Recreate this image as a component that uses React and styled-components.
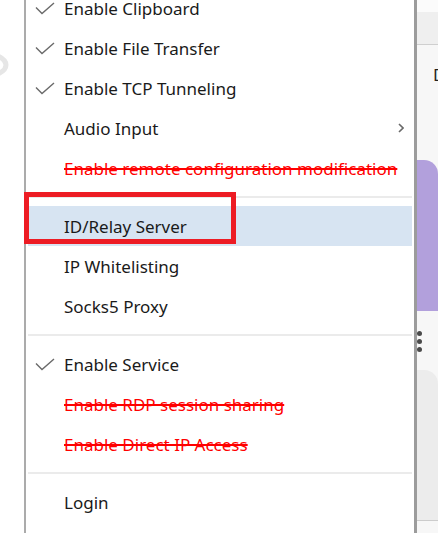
import React from "react";
import styled, { createGlobalStyle } from "styled-components";

const GlobalStyle = createGlobalStyle`
  html, body {
    margin: 0;
    padding: 0;
    background: #ffffff;
    overflow: hidden;
  }
  body {
    font-family: "Noto Sans", "Open Sans", sans-serif;
  }
`;

const menuItems = [
  { label: "Enable Clipboard", checked: true },
  { label: "Enable File Transfer", checked: true },
  { label: "Enable TCP Tunneling", checked: true },
  { label: "Audio Input", submenu: true },
  { label: "Enable remote configuration modification", disabled: true },
  { separator: true },
  { label: "ID/Relay Server", active: true },
  { label: "IP Whitelisting" },
  { label: "Socks5 Proxy" },
  { separator: true },
  { label: "Enable Service", checked: true },
  { label: "Enable RDP session sharing", disabled: true },
  { label: "Enable Direct IP Access", disabled: true },
  { separator: true },
  { label: "Login" },
];

function CheckIcon() {
  return (
    <svg width="20" height="13" viewBox="0 0 20 13" fill="none">
      <path d="M1 5.5 L7 11.5 L19 1" stroke="#6a6a6a" strokeWidth="1.4" />
    </svg>
  );
}

function ChevronIcon() {
  return (
    <svg width="6" height="10" viewBox="0 0 6 10" fill="none">
      <path d="M1 1 L5 5 L1 9" stroke="#6a6a6a" strokeWidth="1.6" />
    </svg>
  );
}

export default function App() {
  return (
    <>
      <GlobalStyle />
      <Stage>
        <Backdrop>
          <LeftPane>
            <EyeMark viewBox="0 0 20 30" width="20" height="30">
              <path d="M-8 4 Q6 8 6 15 Q6 22 -8 26" stroke="#e6e6e6" strokeWidth="5" fill="none" />
            </EyeMark>
          </LeftPane>
          <RightPane>
            <TopStrip />
            <Header />
            <Body>
              <Peek>D</Peek>
              <PurpleCard />
              <Dots>
                <Dot />
                <Dot />
                <Dot />
              </Dots>
              <GreyCard />
            </Body>
          </RightPane>
        </Backdrop>

        <Menu>
          {menuItems.map((item, i) =>
            item.separator ? (
              <Separator key={i} />
            ) : (
              <Item key={i} $active={item.active}>
                <Gutter>{item.checked && <CheckIcon />}</Gutter>
                <Label $disabled={item.disabled}>{item.label}</Label>
                <Arrow>{item.submenu && <ChevronIcon />}</Arrow>
              </Item>
            )
          )}
        </Menu>

        <Callout />
      </Stage>
    </>
  );
}

const Stage = styled.div`
  position: relative;
  width: 438px;
  height: 533px;
  overflow: hidden;
  background: #ffffff;
`;

const Backdrop = styled.div`
  display: flex;
  height: 100%;
`;

const LeftPane = styled.div`
  flex: 1;
  padding-top: 50px;
`;

const EyeMark = styled.svg`
  display: block;
`;

const RightPane = styled.div`
  width: 21px;
  display: flex;
  flex-direction: column;
`;

const TopStrip = styled.div`
  height: 12px;
  background: #fbfbfb;
`;

const Header = styled.div`
  height: 32px;
  background: #efefef;
  border-bottom: 1px solid #cfcfcf;
`;

const Body = styled.div`
  flex: 1;
  background: #f7f7f7;
  display: flex;
  flex-direction: column;
`;

const Peek = styled.div`
  height: 115px;
  padding: 18px 0 0 16px;
  box-sizing: border-box;
  font-size: 17px;
  color: #222;
  line-height: 24px;
`;

const PurpleCard = styled.div`
  height: 151px;
  background: #b2a0dc;
  border-top-right-radius: 14px;
`;

const Dots = styled.div`
  height: 59px;
  display: flex;
  flex-direction: column;
  gap: 3px;
  padding: 20px 0 0 0;
  box-sizing: border-box;
`;

const Dot = styled.div`
  width: 5px;
  height: 5px;
  border-radius: 50%;
  background: #4a4a4a;
`;

const GreyCard = styled.div`
  height: 150px;
  background: #ececec;
  border-top-right-radius: 14px;
  border-bottom: 1px solid #cccccc;
`;

const Menu = styled.div`
  position: absolute;
  left: 24px;
  top: -12px;
  width: 393px;
  height: 560px;
  box-sizing: border-box;
  background: #ffffff;
  border-left: 2px solid #ababab;
  border-right: 3px solid #9c9c9c;
  padding: 0 2px;
  display: flex;
  flex-direction: column;
`;

const Item = styled.div`
  height: 40px;
  display: grid;
  grid-template-columns: 36px 1fr 14px;
  align-items: center;
  background: ${(p) => (p.$active ? "#d7e4f2" : "transparent")};
`;

const Gutter = styled.div`
  display: flex;
  align-items: center;
  padding-left: 7px;
`;

const Label = styled.span`
  font-size: 17px;
  color: ${(p) => (p.$disabled ? "#ff0000" : "#1a1a1a")};
  text-decoration: ${(p) => (p.$disabled ? "line-through" : "none")};
  text-decoration-thickness: 2px;
  white-space: nowrap;
`;

const Arrow = styled.div`
  display: flex;
  align-items: center;
`;

const Separator = styled.div`
  height: 2px;
  margin: 8px 0;
  background: #ebebeb;
`;

const Callout = styled.div`
  position: absolute;
  left: 24px;
  top: 192px;
  width: 212px;
  height: 52px;
  box-sizing: border-box;
  border: 5px solid #ed1c24;
`;
